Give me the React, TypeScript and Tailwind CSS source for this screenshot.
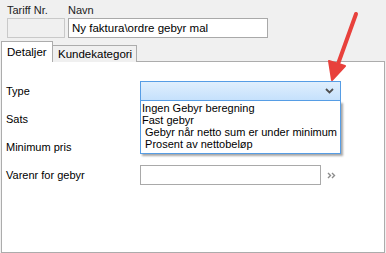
import React from 'react'

const font = { fontFamily: '"Liberation Sans", Arial, sans-serif' }

const options = [
  'Ingen Gebyr beregning',
  'Fast gebyr',
  ' Gebyr når netto sum er under minimum',
  ' Prosent av nettobeløp',
]

function Chevron() {
  return (
    <svg width="9" height="6" viewBox="0 0 9 6">
      <path d="M1 1 L4.5 4.5 L8 1" fill="none" stroke="#505050" strokeWidth="1.8" />
    </svg>
  )
}

function DoubleChevron() {
  return (
    <svg width="9" height="7" viewBox="0 0 9 7">
      <path d="M1 1 L3.5 3.5 L1 6 M5 1 L7.5 3.5 L5 6" fill="none" stroke="#8c8c8c" strokeWidth="1.4" />
    </svg>
  )
}

function RedArrow() {
  return (
    <svg
      className="absolute left-0 top-0 pointer-events-none"
      width="386"
      height="253"
      viewBox="0 0 386 253"
    >
      <line x1="356" y1="14" x2="338" y2="64" stroke="#e8413c" strokeWidth="4" strokeLinecap="round" />
      <path d="M332 80 L329 61 L345 66 Z" fill="#e8413c" stroke="#e8413c" strokeWidth="2" strokeLinejoin="round" />
    </svg>
  )
}

export default function App() {
  return (
    <div
      className="relative w-[386px] h-[253px] bg-[#f0f0f0] text-[11px] text-black overflow-hidden"
      style={font}
    >
      <div className="flex gap-[3px] pl-[7px] pt-[3px]">
        <div className="flex flex-col">
          <div className="h-[15px] leading-[15px] text-[#222]">Tariff Nr.</div>
          <div className="w-[58px] h-[20px] border border-[#c9c9c9] bg-[#f0f0f0]" />
        </div>
        <div className="flex flex-col">
          <div className="h-[15px] leading-[15px] text-[#222]">Navn</div>
          <div className="w-[200px] h-[20px] border border-[#a9a9a9] bg-white px-[3px] leading-[18px] text-[11.5px]">
            Ny faktura\ordre gebyr mal
          </div>
        </div>
      </div>

      <div className="flex items-end pl-[1px] mt-[3px] h-[21px]">
        <div className="relative z-10 w-[52px] h-[21px] bg-white border border-b-0 border-[#acacac] pl-[5px] pt-[2px] text-[11.5px]">
          Detaljer
        </div>
        <div className="w-[84px] h-[17px] bg-[#f0f0f0] border border-l-0 border-b-0 border-[#acacac] pl-[5px] leading-[16px] text-[11.5px]">
          Kundekategori
        </div>
      </div>

      <div className="ml-[1px] -mt-[1px] w-[384px] h-[192px] bg-white border border-[#acacac] pt-[19px] pl-[4px] flex flex-col gap-[8px]">
        <div className="flex items-center h-[20px]">
          <div className="w-[134px]">Type</div>
          <div className="relative">
            <div className="w-[201px] h-[20px] border border-[#569de5] bg-gradient-to-b from-[#e0effd] to-[#c5e1fc] flex items-center justify-end pr-[6px]">
              <Chevron />
            </div>
            <div className="absolute left-0 top-[20px] w-[201px] h-[53px] bg-white border border-t-0 border-[#569de5] pl-[1px] pt-[1px] shadow-[2px_2px_2px_rgba(0,0,0,0.35)] z-20">
              {options.map(o => (
                <div key={o} className="h-[12px] leading-[12px] whitespace-pre">
                  {o}
                </div>
              ))}
            </div>
          </div>
        </div>
        <div className="flex items-center h-[20px]">
          <div className="w-[134px]">Sats</div>
        </div>
        <div className="flex items-center h-[20px]">
          <div className="w-[134px]">Minimum pris</div>
        </div>
        <div className="flex items-center h-[20px]">
          <div className="w-[134px]">Varenr for gebyr</div>
          <div className="w-[181px] h-[20px] border border-[#a9a9a9] bg-white" />
          <div className="ml-[6px] flex items-center">
            <DoubleChevron />
          </div>
        </div>
      </div>

      <RedArrow />
    </div>
  )
}
